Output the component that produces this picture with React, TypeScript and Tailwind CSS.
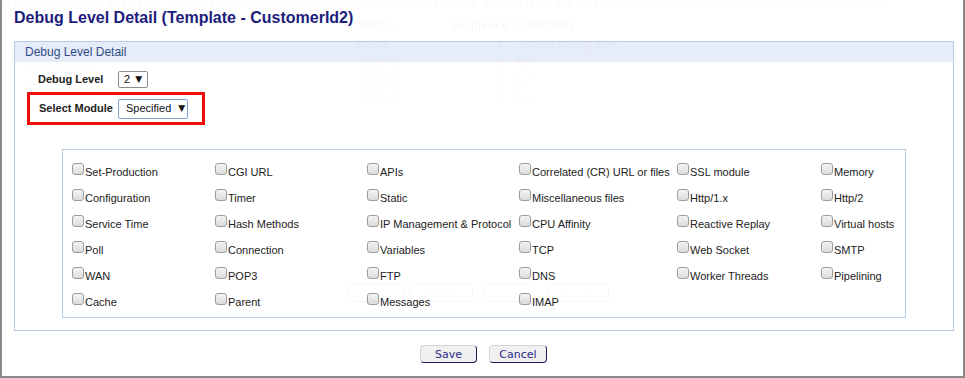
import React from "react";

const rows: string[][] = [
  ["Set-Production", "CGI URL", "APIs", "Correlated (CR) URL or files", "SSL module", "Memory"],
  ["Configuration", "Timer", "Static", "Miscellaneous files", "Http/1.x", "Http/2"],
  ["Service Time", "Hash Methods", "IP Management & Protocol", "CPU Affinity", "Reactive Replay", "Virtual hosts"],
  ["Poll", "Connection", "Variables", "TCP", "Web Socket", "SMTP"],
  ["WAN", "POP3", "FTP", "DNS", "Worker Threads", "Pipelining"],
  ["Cache", "Parent", "Messages", "IMAP", "", ""],
];

function Check({ label }: { label: string }) {
  if (!label) return <div className="h-[26px]" />;
  return (
    <div className="h-[26px] flex items-center whitespace-nowrap text-[11px] leading-[13px] text-[#222]">
      <span>
        <span className="inline-block align-baseline w-[12px] h-[12px] mb-[1px] mr-[1px] rounded-[3px] border border-[#9c9c9c] bg-gradient-to-b from-[#f4f4f4] to-[#dcdcdc]" />
        {label}
      </span>
    </div>
  );
}

function Ghost() {
  const g = "text-black/[0.035]";
  return (
    <div className="absolute inset-0 pointer-events-none overflow-hidden font-['Liberation_Sans',Arial,sans-serif]">
      <div className={`absolute left-[-6px] top-[-5px] text-[12px] whitespace-nowrap ${g}`}>
        the conditions will be evaluated. Template with first matching condition is used for response. Default template (one without condition) is used if no other conditions match.
      </div>
      <div className={`absolute left-[358px] top-[16px] text-[12px] font-bold ${g}`}>Status</div>
      <div className={`absolute left-[452px] top-[16px] text-[12px] font-bold ${g}`}>Sequence</div>
      <div className={`absolute left-[517px] top-[16px] text-[12px] font-bold ${g}`}>Condition</div>
      {["active", "inactive", "inactive", "inactive"].map((s, i) => (
        <React.Fragment key={i}>
          <div className={`absolute left-[356px] text-[12px] ${g}`} style={{ top: 34 + i * 18 }}>{s}</div>
          <div className={`absolute left-[496px] text-[12px] ${g}`} style={{ top: 34 + i * 18 }}>{i + 1}</div>
          <div className={`absolute left-[517px] text-[12px] ${g}`} style={{ top: 34 + i * 18 }}>{i === 0 ? "--default template--" : "NA"}</div>
          <div className={`absolute left-[25px] text-[12px] underline text-black/[0.025]`} style={{ top: 34 + i * 18 }}>{["CustomerId2", "CustomerId3", "CustomerId5", "CustomerId6"][i]}</div>
        </React.Fragment>
      ))}
      {[
        ["Add", 347, 58],
        ["Delete", 409, 64],
        ["Update", 483, 52],
        ["Active", 547, 62],
      ].map(([t, l, w]) => (
        <div
          key={t as string}
          className="absolute top-[284px] h-[18px] rounded-[4px] border border-black/[0.03] text-[12px] flex items-center justify-center text-black/[0.03]"
          style={{ left: l as number, width: w as number }}
        >
          {t}
        </div>
      ))}
    </div>
  );
}

export default function App() {
  return (
    <div className="relative w-[965px] h-[378px] bg-white overflow-hidden font-['Liberation_Sans',Arial,sans-serif]">
      <div className="w-[965px] h-[378px] border-l-2 border-r-2 border-b-2 border-[#8a8a8a] pl-[12px] pt-[9px] flex flex-col">
        <h1 className="text-[16px] leading-[18px] font-bold text-[#1d1d7c]">
          Debug Level Detail (Template - CustomerId2)
        </h1>
        <div className="mt-[14px] w-[940px] h-[290px] border border-[#b9cae8] flex flex-col">
          <div className="h-[20px] bg-[#e6ecf8] pl-[10px] flex items-center text-[12px] text-[#2d4c89]">
            Debug Level Detail
          </div>
          <div className="pt-[9px] flex flex-col">
            <div className="flex items-center h-[17px] pl-[23px]">
              <span className="w-[80px] text-[11px] font-bold text-[#222]">Debug Level</span>
              <span className="h-[17px] w-[30px] border border-[#8e8e8e] rounded-[2px] bg-white flex items-center pl-[5px] gap-[5px] text-[11px] text-[#111]">
                <span>2</span>
                <span className="text-[9px] leading-none font-['DejaVu_Sans',sans-serif]">▼</span>
              </span>
            </div>
            <div className="mt-[4px] ml-[12px] w-[178px] h-[33px] border-[3px] border-[#f20d0d] flex items-center pl-[9px]">
              <span className="w-[79px] text-[11px] font-bold text-[#222]">Select Module</span>
              <span className="h-[20px] w-[70px] border border-[#7ea3d3] rounded-[2px] bg-white flex items-center pl-[7px] gap-[7px] text-[11px] text-[#111]">
                <span>Specified</span>
                <span className="text-[9px] leading-none font-['DejaVu_Sans',sans-serif]">▼</span>
              </span>
            </div>
            <div className="mt-[24px] ml-[47px] w-[844px] h-[169px] border border-[#b9cde9] pl-[9px] pt-[8px]">
              <div className="grid grid-cols-[143px_152px_152px_158px_144px_1fr]">
                {rows.flat().map((l, i) => (
                  <Check key={i} label={l} />
                ))}
              </div>
            </div>
          </div>
        </div>
        <div className="mt-[14px] flex justify-center gap-[12px] pr-[10px]">
          <button className="w-[57px] h-[18px] rounded-[4px] bg-[#f0f0f0] border border-t-[#d4d4d4] border-l-[#d4d4d4] border-r-[#1e1e5e] border-b-[#1e1e5e] text-[11px] text-[#2a2a8a] font-['DejaVu_Sans',Verdana,sans-serif] leading-none">
            Save
          </button>
          <button className="w-[58px] h-[18px] rounded-[4px] bg-[#f0f0f0] border border-t-[#d4d4d4] border-l-[#d4d4d4] border-r-[#1e1e5e] border-b-[#1e1e5e] text-[11px] text-[#2a2a8a] font-['DejaVu_Sans',Verdana,sans-serif] leading-none">
            Cancel
          </button>
        </div>
      </div>
      <Ghost />
    </div>
  );
}
